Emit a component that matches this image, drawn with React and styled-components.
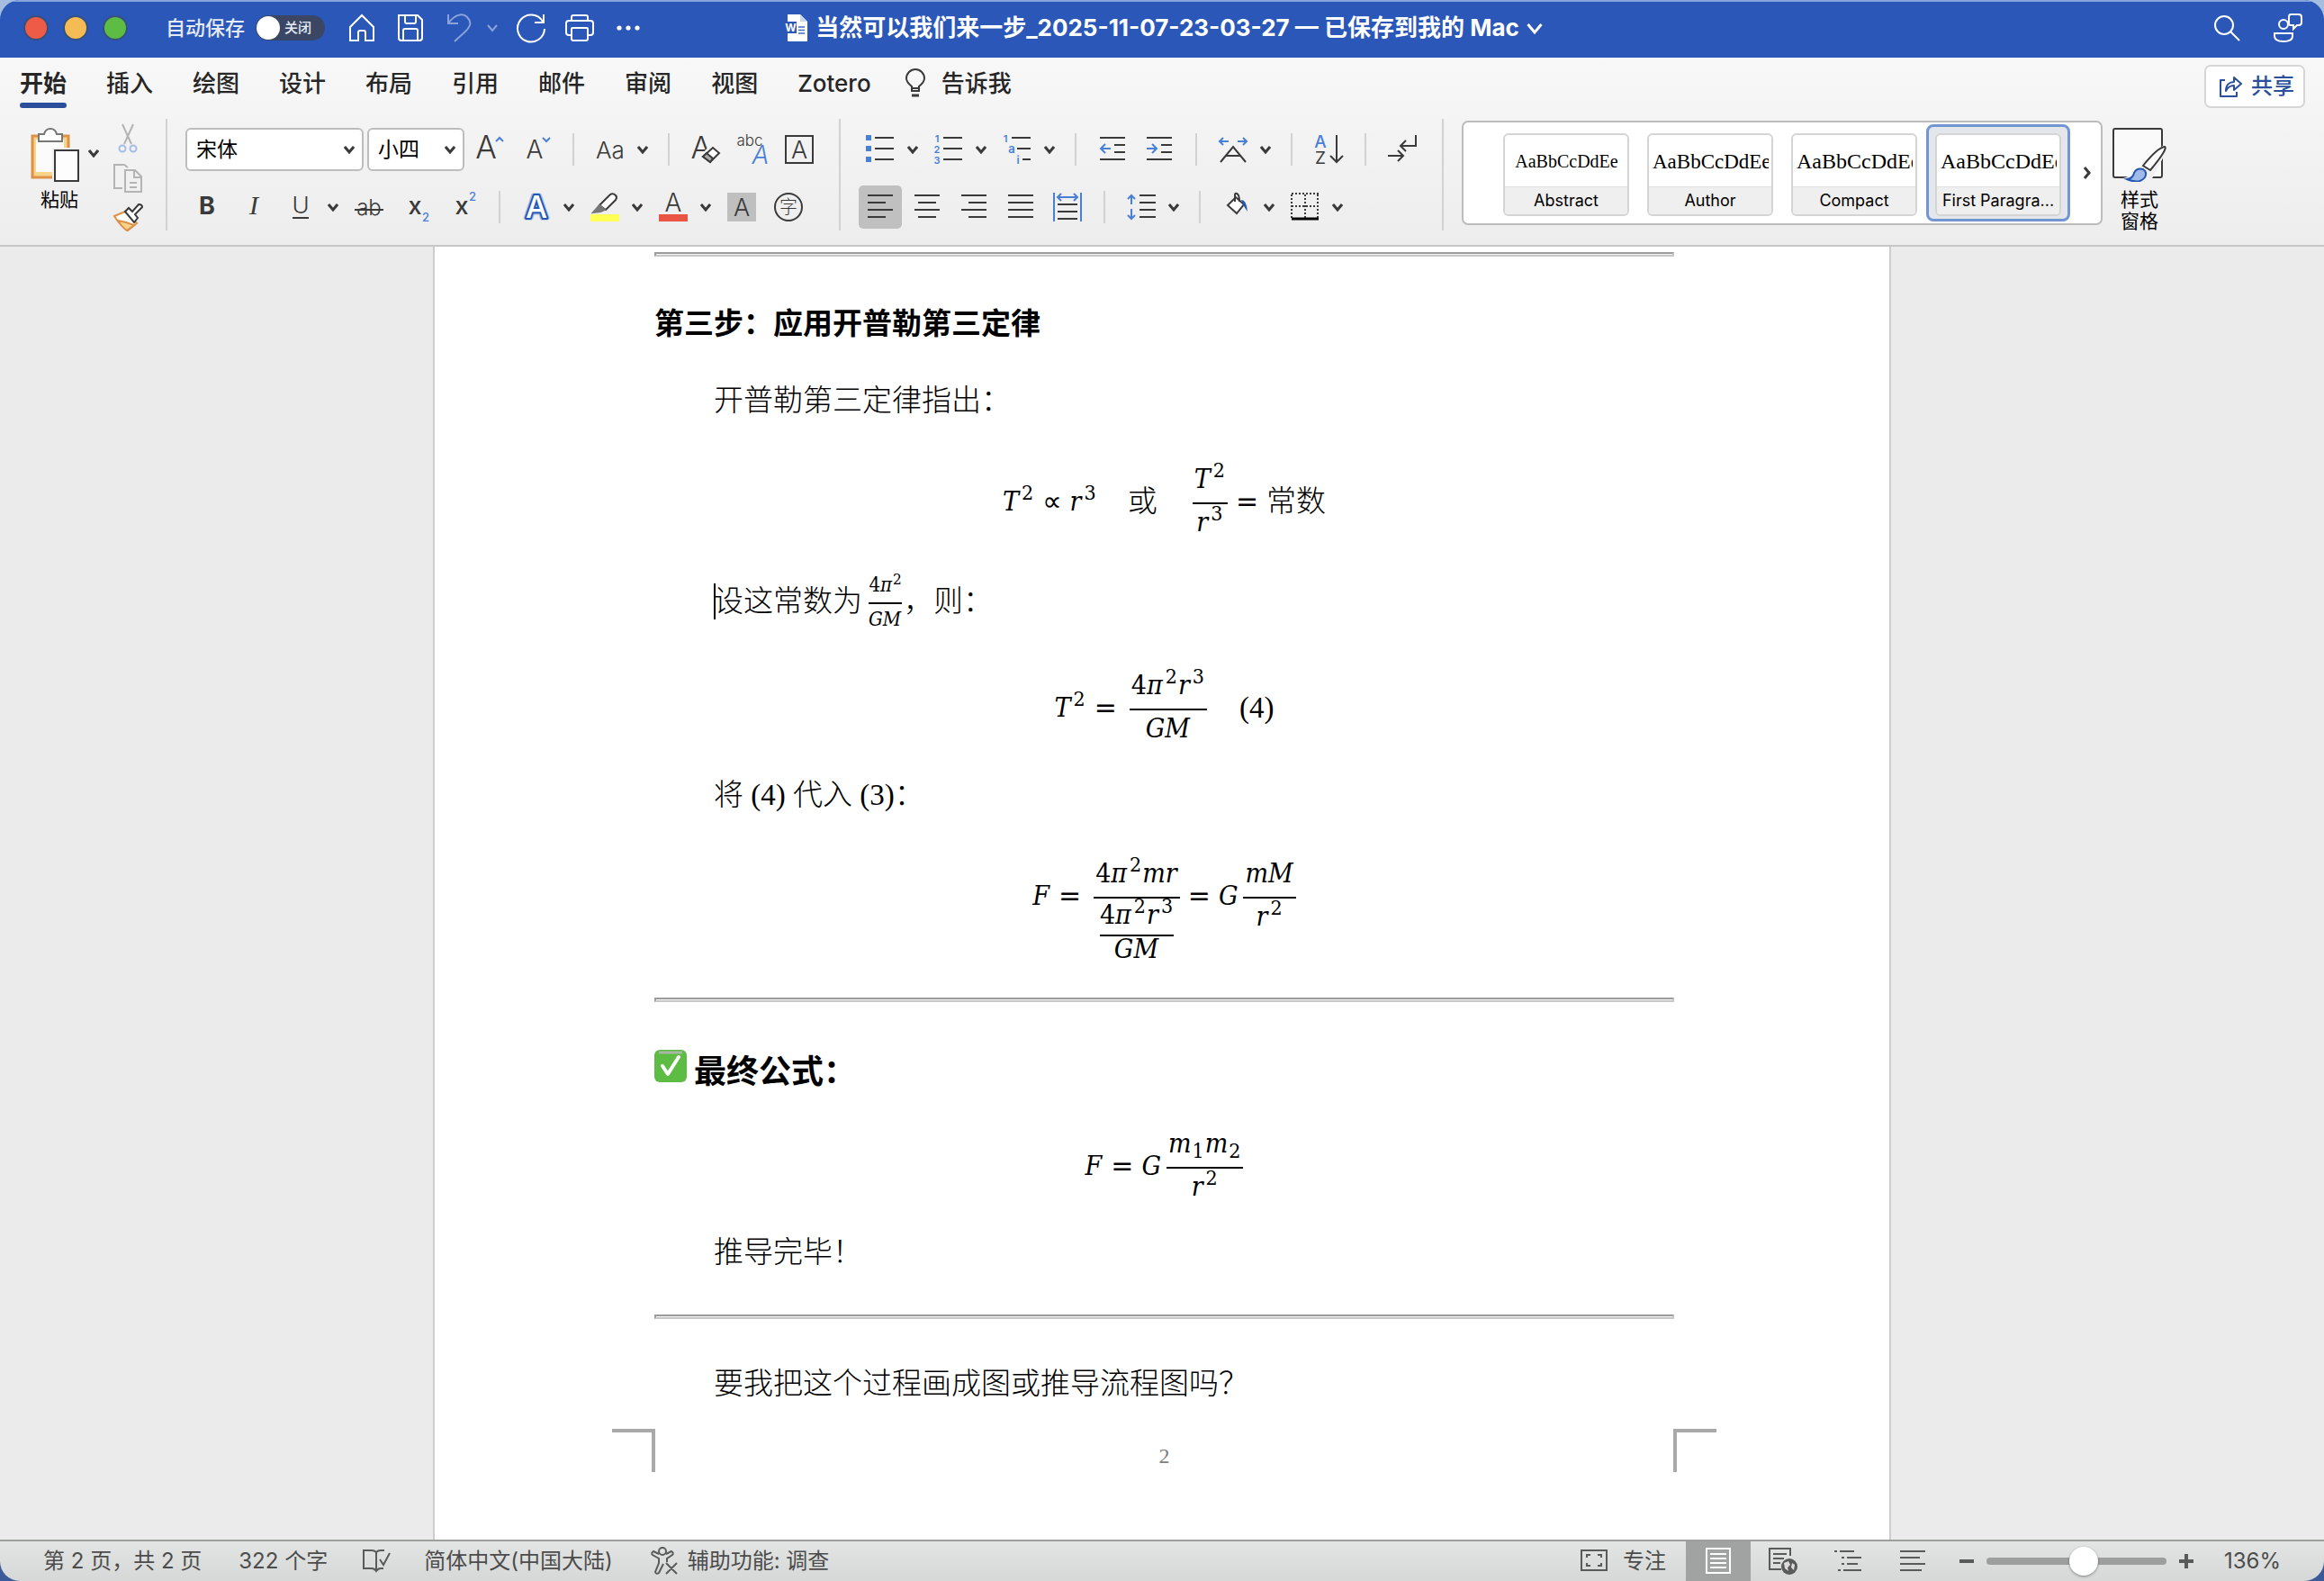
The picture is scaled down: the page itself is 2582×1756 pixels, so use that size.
import styled, { createGlobalStyle } from "styled-components";

const INK = "#3a3a3a";
const BLUE = "#4a7fd6";
const UI_FONT = `Inter, "Noto Sans CJK SC", sans-serif`;
const DOC_FONT = `"Liberation Serif", "Noto Sans CJK SC", serif`;
const MATH_FONT = `"DejaVu Serif Condensed", "DejaVu Serif", serif`;

export default function App() {
  return (
    <Window>
      <GlobalStyle />
      <TitleBar />
      <TabBar />
      <Ribbon />
      <Document />
      <StatusBar />
    </Window>
  );
}

/* ---------- title bar ---------- */

function TitleBar() {
  return (
    <Title>
      <TitleSide>
        <Lights>
          <Light $color="#ee5b47" />
          <Light $color="#f5bb55" />
          <Light $color="#5cbc44" />
        </Lights>
        <AutoSave>
          自动保存
          <Switch>
            <SwitchInput type="checkbox" />
            <SwitchText>关闭</SwitchText>
          </Switch>
        </AutoSave>
        <QuickTools>
          <Plain aria-label="主页">
            <Icon>
              <path d="M3 15 16 2l13 13v15h-9V21q0-2-2-2h-4q-2 0-2 2v9H3z" />
            </Icon>
          </Plain>
          <Plain aria-label="保存">
            <Icon>
              <path d="M3 2h21l5 5v20q0 3-3 3H6q-3 0-3-3zM10 2v7q0 2 2 2h8q2 0 2-2V2M8 30V19q0-2 2-2h12q2 0 2 2v11" />
            </Icon>
          </Plain>
          <Plain aria-label="撤销" $dim>
            <Icon>
              <path d="M4 1v10h11M4 11C11 1 20-1 25 4c6 6 3 11-2 16L11 31" />
            </Icon>
          </Plain>
          <Plain aria-label="撤销选项" $dim>
            <Chevron $thin />
          </Plain>
          <Plain aria-label="重做">
            <Icon>
              <path d="M30 1v9H20M29 9A15 15 0 1 0 31 17" />
            </Icon>
          </Plain>
          <Plain aria-label="打印">
            <Icon>
              <path d="M7 8V4q0-2 2-2h14q2 0 2 2v4M7 24H4q-3 0-3-3v-10q0-3 3-3h24q3 0 3 3v10q0 3-3 3h-3M7 17q0-1 1-1h16q1 0 1 1v11q0 2-2 2H9q-2 0-2-2z" />
            </Icon>
          </Plain>
          <Plain aria-label="更多">
            <Icon>
              <g fill="#fff" stroke="none">
                <circle cx="6" cy="16" r="2.6" />
                <circle cx="16" cy="16" r="2.6" />
                <circle cx="26" cy="16" r="2.6" />
              </g>
            </Icon>
          </Plain>
        </QuickTools>
      </TitleSide>
      <FileName>
        <svg width="26" height="30" viewBox="0 0 26 30">
          <path d="M3 0h14l8 8v22H3z" fill="#fff" />
          <path d="M17 0v8h8z" fill="#c9d5ea" />
          <path d="M15 14h7M15 17.500h7M15 21h7" stroke="#3f6cc4" strokeWidth="1.500" />
          <rect x="0" y="8" width="13" height="13" fill="#2b58b8" />
          <text x="6.500" y="19" textAnchor="middle" fontSize="12" fontWeight="700" fill="#fff" fontFamily="Inter">
            W
          </text>
        </svg>
        <span>当然可以我们来一步_2025-11-07-23-03-27 — 已保存到我的 Mac</span>
        <Chevron $w={18} $thin />
      </FileName>
      <TitleEnd>
        <Plain aria-label="搜索">
          <Icon>
            <circle cx="13" cy="13" r="10" />
            <path d="m20 20 10 10" />
          </Icon>
        </Plain>
        <Plain aria-label="批注">
          <Icon>
            <circle cx="11" cy="12" r="5" />
            <path d="M1 22h20v3q0 6-10 6T1 25zM19 1h9q3 0 3 3v6q0 3-3 3h-2l-4 4v-4h-3q-2 0-2-2V4q0-3 2-3z" />
          </Icon>
        </Plain>
      </TitleEnd>
    </Title>
  );
}

/* ---------- tabs ---------- */

const tabs = ["开始", "插入", "绘图", "设计", "布局", "引用", "邮件", "审阅", "视图", "Zotero"];

function TabBar() {
  return (
    <Tabs>
      {tabs.map((name, i) => (
        <Tab key={name} $active={i === 0}>
          {name}
        </Tab>
      ))}
      <TellMe>
        <svg width="26" height="34" viewBox="0 0 26 34" fill="none" stroke={INK} strokeWidth="2">
          <path d="M9 25v-5C4 16 3 13 3 11a10 10 0 0 1 20 0c0 2-1 5-6 9v5zM9 22h8" />
          <path d="M9 30h8" strokeWidth="3" />
        </svg>
        告诉我
      </TellMe>
      <Share>
        <svg width="26" height="24" viewBox="0 0 26 24" fill="none" stroke="#2b4f9b" strokeWidth="2" strokeLinejoin="round">
          <path d="M7 5H2v18h18v-5" />
          <path d="M8 17C8 10 12 7 17 7V2l8 7-8 7v-5c-4 0-7 2-9 6z" />
        </svg>
        共享
      </Share>
    </Tabs>
  );
}

/* ---------- ribbon ---------- */

function Ribbon() {
  return (
    <RibbonBar>
      <Paste>
        <svg width="64" height="60" viewBox="0 0 64 60" fill="none">
          <path d="M2 9h40v46H2z" fill="#f6d48c" stroke="#dd9146" strokeWidth="3" />
          <path d="M6 13h31v36H6z" fill="#fbfbfb" />
          <path d="M9 15V7h6c2-8 12-8 14 0h6v8z" fill="#fff" stroke="#777" strokeWidth="2" />
          <path d="M24 22h30v38H24z" fill="#f0f0f0" />
          <path d="M27 25h26v34H27z" fill="#fdfdfd" stroke={INK} strokeWidth="2" />
        </svg>
        粘贴
      </Paste>
      <PasteMore aria-label="粘贴选项">
        <Chevron />
      </PasteMore>
      <ClipColumn>
        <Tool aria-label="剪切">
          <Icon>
            <path d="M10 0 20 22M22 0 12 22" stroke="#b4b4b4" />
            <g stroke="#a3bde6">
              <circle cx="10" cy="27" r="3.500" />
              <circle cx="22" cy="27" r="3.500" />
            </g>
          </Icon>
        </Tool>
        <Tool aria-label="复制">
          <Icon stroke="#b4b4b4">
            <path d="M10 27H1V1h11l4 3M13 7h11l7 7v17H13zM23 7v8h8M18 21h8M18 26h8" />
          </Icon>
        </Tool>
        <Tool aria-label="格式刷">
          <Icon>
            <path d="m1 14 12-5 13 13-10 8Q7 24 1 14z" fill="#fff" stroke="#dd9146" />
            <path d="m5 19 9 2 9 3-8 6q-6-4-10-11z" fill="#f6d48c" stroke="#dd9146" />
            <path d="m13 9 4-4 4 4 7-8q4 0 4 3l-8 8 3 4-4 5z" fill="#fff" />
          </Icon>
        </Tool>
      </ClipColumn>
      <GroupLine $left={26} $right={20} />

      <Rows>
        <Row>
          <Field $width={198}>
            <select aria-label="字体">
              <option>宋体</option>
            </select>
            <Chevron />
          </Field>
          <Field $width={108} $snug>
            <select aria-label="字号">
              <option>小四</option>
            </select>
            <Chevron />
          </Field>
          <Tool aria-label="增大字号" $near>
            <Icon>
              <Glyph x="12" y="26" size={35}>A</Glyph>
              <path d="m23 7 4-4 4 4" stroke={BLUE} />
            </Icon>
          </Tool>
          <Tool aria-label="减小字号">
            <Icon>
              <Glyph x="14" y="26" size={28}>A</Glyph>
              <path d="m23 3 4 4 4-4" stroke={BLUE} />
            </Icon>
          </Tool>
          <Line />
          <Tool aria-label="更改大小写">
            <Icon>
              <Glyph x="16" y="26" size={26}>Aa</Glyph>
            </Icon>
          </Tool>
          <More />
          <Line />
          <Tool aria-label="清除格式">
            <Icon>
              <Glyph x="11" y="26" size={34}>A</Glyph>
              <path d="m13 23 10-10 8 6-10 11z" fill="#f3f3f3" stroke="#f3f3f3" strokeWidth="5" />
              <path d="m13 24 11-10 7 6-10 10z" fill="#fff" />
              <path d="m13 24 4-4 7 6-3 4z" fill="#aaa" />
            </Icon>
          </Tool>
          <Tool aria-label="拼音指南">
            <Icon>
              <Glyph x="13" y="12" size={17}>abc</Glyph>
              <Glyph x="25" y="32" size={28} color={BLUE} slant>A</Glyph>
            </Icon>
          </Tool>
          <Tool aria-label="字符边框">
            <Icon>
              <path d="M1 1h30v30H1z" />
              <Glyph x="16" y="26" size={27}>A</Glyph>
            </Icon>
          </Tool>
        </Row>
        <Row $inset>
          <Tool aria-label="加粗">
            <Icon>
              <Glyph x="16" y="24" size={27} weight={700}>B</Glyph>
            </Icon>
          </Tool>
          <Tool aria-label="倾斜">
            <Icon>
              <Glyph x="16" y="24" size={30} family="Liberation Serif" slant>I</Glyph>
            </Icon>
          </Tool>
          <Tool aria-label="下划线">
            <Icon>
              <Glyph x="16" y="23" size={26}>U</Glyph>
              <path d="M7 28h18" />
            </Icon>
          </Tool>
          <More />
          <Tool aria-label="删除线">
            <Icon>
              <Glyph x="16" y="25" size={24}>ab</Glyph>
              <path d="M0 19h32" />
            </Icon>
          </Tool>
          <Tool aria-label="下标">
            <Icon>
              <Glyph x="15" y="24" size={27} weight={500}>x</Glyph>
              <Glyph x="27" y="32" size={13} color={BLUE} weight={500}>2</Glyph>
            </Icon>
          </Tool>
          <Tool aria-label="上标">
            <Icon>
              <Glyph x="15" y="24" size={27} weight={500}>x</Glyph>
              <Glyph x="27" y="9" size={13} color={BLUE} weight={500}>2</Glyph>
            </Icon>
          </Tool>
          <Line />
          <Tool aria-label="文本效果">
            <Icon>
              <g strokeLinejoin="round">
                <text x="16" y="28" textAnchor="middle" fontFamily="Inter" fontWeight="700" fontSize="34" fill="#a9c1ea" stroke="#a9c1ea" strokeWidth="5">
                  A
                </text>
                <text x="16" y="28" textAnchor="middle" fontFamily="Inter" fontWeight="500" fontSize="34" fill="#fff" stroke="#2456b4" strokeWidth="4" paintOrder="stroke">
                  A
                </text>
              </g>
            </Icon>
          </Tool>
          <More />
          <Tool aria-label="突出显示">
            <Icon>
              <path d="m10 14 12-12q3-2 6 1 2 2 0 5L17 19z" fill="#fff" />
              <path d="m10 14 6 5-5 2-8 1z" fill="#777" stroke="#777" />
              <path d="M0 24h32v8H0z" fill="#ffff54" stroke="none" />
            </Icon>
          </Tool>
          <More />
          <Tool aria-label="字体颜色">
            <Icon>
              <Glyph x="16" y="21" size={28}>A</Glyph>
              <path d="M0 24h32v8H0z" fill="#e95445" stroke="none" />
            </Icon>
          </Tool>
          <More />
          <Tool aria-label="字符底纹">
            <Icon>
              <path d="M0 0h32v32H0z" fill="#bfbfbf" stroke="none" />
              <Glyph x="16" y="26" size={27}>A</Glyph>
            </Icon>
          </Tool>
          <Tool aria-label="带圈字符">
            <Icon>
              <circle cx="16" cy="16" r="15" />
              <Glyph x="16" y="23" size={20} family="Noto Sans CJK SC">字</Glyph>
            </Icon>
          </Tool>
        </Row>
      </Rows>
      <GroupLine $left={28} $right={28} />

      <Rows>
        <Row>
          <Tool aria-label="项目符号">
            <Icon>
              <path d="M0 0h6v6H0zM0 12h6v6H0zM0 24h6v6H0z" fill={BLUE} stroke="none" />
              <path d="M10 3h21M10 15h21M10 27h21" />
            </Icon>
          </Tool>
          <More />
          <Tool aria-label="编号">
            <Icon>
              <Glyph x="3" y="8" size={11} color={BLUE} weight={600}>1</Glyph>
              <Glyph x="3" y="20" size={11} color={BLUE} weight={600}>2</Glyph>
              <Glyph x="3" y="32" size={11} color={BLUE} weight={600}>3</Glyph>
              <path d="M10 3h21M10 15h21M10 27h21" />
            </Icon>
          </Tool>
          <More />
          <Tool aria-label="多级列表">
            <Icon>
              <Glyph x="3" y="8" size={11} color={BLUE} weight={600}>1</Glyph>
              <Glyph x="10" y="20" size={13} color={BLUE} weight={600}>a</Glyph>
              <Glyph x="17" y="32" size={12} color={BLUE} weight={600}>i</Glyph>
              <path d="M10 3h21M16 15h15M22 27h9" />
            </Icon>
          </Tool>
          <More />
          <Line />
          <Tool aria-label="减少缩进量">
            <Icon>
              <path d="M2 3h28M18 11h12M18 19h12M2 27h28" />
              <path d="M14 15H3M8 10l-5 5 5 5" stroke={BLUE} />
            </Icon>
          </Tool>
          <Tool aria-label="增加缩进量">
            <Icon>
              <path d="M2 3h28M18 11h12M18 19h12M2 27h28" />
              <path d="M2 15h11M8 10l5 5-5 5" stroke={BLUE} />
            </Icon>
          </Tool>
          <Line />
          <Tool aria-label="中文版式">
            <Icon>
              <path d="m2 30 14-17 14 17M8 23h16" />
              <path d="M11 7H1M5 3 1 7l4 4M21 7h10M27 3l4 4-4 4" stroke={BLUE} />
            </Icon>
          </Tool>
          <More />
          <Line />
          <Tool aria-label="排序">
            <Icon>
              <Glyph x="7" y="14" size={19} color={BLUE} weight={500}>A</Glyph>
              <Glyph x="7" y="32" size={19} weight={400}>Z</Glyph>
              <path d="M25 0v30M18 23l7 7 7-7" />
            </Icon>
          </Tool>
          <Line />
          <Tool aria-label="显示编辑标记">
            <Icon>
              <path d="M31 0v12H15M20 6l-6 6 6 6M0 23h16M11 17l6 6-6 6" />
            </Icon>
          </Tool>
        </Row>
        <Row>
          <Tool aria-label="左对齐" $on>
            <Icon>
              <path d="M2 3h28M2 11h20M2 19h28M2 27h20" />
            </Icon>
          </Tool>
          <Tool aria-label="居中">
            <Icon>
              <path d="M2 3h28M6 11h20M2 19h28M6 27h20" />
            </Icon>
          </Tool>
          <Tool aria-label="右对齐">
            <Icon>
              <path d="M2 3h28M10 11h20M2 19h28M10 27h20" />
            </Icon>
          </Tool>
          <Tool aria-label="两端对齐">
            <Icon>
              <path d="M2 3h28M2 11h28M2 19h28M2 27h28" />
            </Icon>
          </Tool>
          <Tool aria-label="分散对齐">
            <Icon>
              <path d="M5 13h22M5 21h22M5 29h22" />
              <path d="M1 0v32M31 0v32M5 5h22M9 1 5 5l4 4M23 1l4 4-4 4" stroke={BLUE} />
            </Icon>
          </Tool>
          <Line />
          <Tool aria-label="行距">
            <Icon>
              <path d="M14 3h18M14 11h18M14 19h18M14 27h18" />
              <path d="M5 13V3M1 7l4-4 4 4M5 18v11M1 25l4 4 4-4" stroke={BLUE} />
            </Icon>
          </Tool>
          <More />
          <Line />
          <Tool aria-label="底纹">
            <Icon>
              <path d="m6 14 9-9 9 8-8 10zM14 10V3q0-3 2-2 3 1 3 9" fill="#fff" />
              <path d="M21 8q6 0 7 13-3-4-5-8z" fill="#2456b4" stroke="none" />
            </Icon>
          </Tool>
          <More />
          <Tool aria-label="边框">
            <Icon>
              <path d="M1 1h30M1 2v26M30 2v26M16 2v26M1 15h30" strokeDasharray="2 2" />
              <path d="M1 29h30" stroke="#000" strokeWidth="3" />
            </Icon>
          </Tool>
          <More />
        </Row>
      </Rows>
      <GroupLine $left={28} $right={20} />

      <Gallery>
        {styles.map((s) => (
          <StyleItem key={s.name} $on={s.on}>
            <StyleCard>
              <StylePreview $size={s.size}>
                <span>AaBbCcDdEe</span>
              </StylePreview>
              <StyleName>{s.name}</StyleName>
            </StyleCard>
          </StyleItem>
        ))}
        <GalleryMore aria-label="更多样式">
          <svg width="10" height="16" viewBox="0 0 10 16" fill="none" stroke={INK} strokeWidth="3">
            <path d="m2 2 5 6-5 6" />
          </svg>
        </GalleryMore>
      </Gallery>
      <StylePane>
        <svg width="60" height="60" viewBox="0 0 60 60" fill="none">
          <rect x="1" y="1" width="54" height="54" rx="2" fill="#fafafa" stroke={INK} strokeWidth="2" />
          <path d="M12 56q16-4 22-18L58 18l2 8-18 34z" fill="#f1f1f1" />
          <path d="M34 42Q50 22 58 21q4 2-16 26z" fill="#fff" stroke={INK} strokeWidth="2" />
          <path d="M16 57q7-1 8-7 3-6 10-4 5 3 2 9-6 8-20 2z" fill="#9fbbe8" stroke="#2456b4" strokeWidth="2" />
        </svg>
        <span>样式</span>
        <span>窗格</span>
      </StylePane>
    </RibbonBar>
  );
}

const styles = [
  { name: "Abstract", size: 20 },
  { name: "Author", size: 23 },
  { name: "Compact", size: 24 },
  { name: "First Paragra...", size: 24, on: true },
];

/* ---------- document ---------- */

function Document() {
  return (
    <Canvas>
      <Page>
        <Rule $top={6} />
        <Heading $top={48}>第三步：应用开普勒第三定律</Heading>
        <Para $top={40}>开普勒第三定律指出：</Para>
        <Equation $top={41}>
          <span>
            <Var>T</Var>
            <Sup>2</Sup>
          </span>
          <Rel>∝</Rel>
          <span>
            <Var>r</Var>
            <Sup>3</Sup>
          </span>
          <Word>或</Word>
          <Fraction>
            <Num>
              <Var>T</Var>
              <Sup>2</Sup>
            </Num>
            <Den>
              <Var>r</Var>
              <Sup>3</Sup>
            </Den>
          </Fraction>
          <Rel>=</Rel>
          <Cjk>常数</Cjk>
        </Equation>
        <Para $top={25}>
          <Caret />
          设这常数为
          <SmallFraction>
            <Num>
              4<Var>π</Var>
              <Sup>2</Sup>
            </Num>
            <Den>
              <Var>GM</Var>
            </Den>
          </SmallFraction>
          ，则：
        </Para>
        <Equation $top={32}>
          <span>
            <Var>T</Var>
            <Sup>2</Sup>
          </span>
          <Rel>=</Rel>
          <Fraction>
            <Num>
              4<Var>π</Var>
              <Sup>2</Sup>
              <Var>r</Var>
              <Sup>3</Sup>
            </Num>
            <Den>
              <Var>GM</Var>
            </Den>
          </Fraction>
          <Tag>(4)</Tag>
        </Equation>
        <Para $top={26}>将 (4) 代入 (3)：</Para>
        <Equation $top={41}>
          <Var>F</Var>
          <Rel>=</Rel>
          <Fraction>
            <Num>
              4<Var>π</Var>
              <Sup>2</Sup>
              <Var>mr</Var>
            </Num>
            <Den>
              <NestedFraction>
                <Num>
                  4<Var>π</Var>
                  <Sup>2</Sup>
                  <Var>r</Var>
                  <Sup>3</Sup>
                </Num>
                <Den>
                  <Var>GM</Var>
                </Den>
              </NestedFraction>
            </Den>
          </Fraction>
          <Rel>=</Rel>
          <Var>G</Var>
          <Fraction>
            <Num>
              <Var>mM</Var>
            </Num>
            <Den>
              <Var>r</Var>
              <Sup>2</Sup>
            </Den>
          </Fraction>
        </Equation>
        <Rule $top={66} />
        <Heading $top={50} $big>
          <svg width="36" height="36" viewBox="0 0 36 36">
            <rect width="36" height="36" rx="6" fill="#5cbc44" />
            <path d="M5 3h26" stroke="#a9b8a4" strokeWidth="3" />
            <path d="m9 18 6 9L27 8" fill="none" stroke="#fff" strokeWidth="4" strokeLinecap="round" strokeLinejoin="round" />
          </svg>
          最终公式：
        </Heading>
        <Equation $top={37}>
          <Var>F</Var>
          <Rel>=</Rel>
          <Var>G</Var>
          <Fraction>
            <Num>
              <Var>m</Var>
              <Sub>1</Sub>
              <Var>m</Var>
              <Sub>2</Sub>
            </Num>
            <Den>
              <Var>r</Var>
              <Sup>2</Sup>
            </Den>
          </Fraction>
        </Equation>
        <Para $top={25}>推导完毕！</Para>
        <Rule $top={45} />
        <Para $top={48}>要我把这个过程画成图或推导流程图吗？</Para>
        <PageFoot>
          <Corner $side="right" />
          2
          <Corner $side="left" />
        </PageFoot>
      </Page>
    </Canvas>
  );
}

/* ---------- status bar ---------- */

function StatusBar() {
  return (
    <Status>
      <span>第 2 页，共 2 页</span>
      <StatusText $gap={41}>322 个字</StatusText>
      <StatusText $gap={38}>
        <Icon stroke="#5a5a5a">
          <path d="M16 6q-2-2-5-2H2v20h9q3 0 5 3 2-3 5-3h3M16 6v20M16 6q2-2 5-2h4M20 14l4 6 7-13" />
        </Icon>
      </StatusText>
      <StatusText $gap={37}>简体中文(中国大陆)</StatusText>
      <StatusText $gap={41}>
        <Icon stroke="#5a5a5a">
          <circle cx="14" cy="5" r="4" />
          <path d="M10 8 4 5q-3 2-1 4l7 4v5L6 28q1 3 4 1l5-10M18 8l6-3q3 2 1 4l-6 4v4M18 18l12 12M30 18 18 30" />
        </Icon>
        <span>辅助功能: 调查</span>
      </StatusText>
      <StatusEnd>
        <Focus>
          <Icon stroke="#5a5a5a">
            <path d="M2 4h28v22H2zM8 12V9h4M20 9h4v3M8 18v3h4M20 21h4v-3" />
          </Icon>
          专注
        </Focus>
        <View aria-label="打印版式" $on>
          <Icon stroke="#fff">
            <path d="M3 2h26v27H3zM7 8h18M7 13h18M7 18h18M7 23h18" />
          </Icon>
        </View>
        <View aria-label="Web 版式">
          <Icon stroke="#5a5a5a">
            <path d="M14 25H1V2h23v8M5 8h15M5 13h12M5 18h8" />
            <circle cx="23" cy="22" r="9" fill="#5a5a5a" stroke="none" />
            <path d="m17 18 5-2 2 4-3 3 1 4-4-3zM26 18l3 2-1 6-3-3z" fill="#ddd" stroke="none" />
          </Icon>
        </View>
        <View aria-label="大纲">
          <Icon stroke="#5a5a5a">
            <path d="M1 5h3M7 5h16M9 12h3M15 12h16M9 19h3M15 19h12M5 26h3M11 26h20" />
          </Icon>
        </View>
        <View aria-label="草稿">
          <Icon stroke="#5a5a5a">
            <path d="M2 5h28M2 12h22M2 19h28M2 26h24" />
          </Icon>
        </View>
        <Zoom>
          <Plain aria-label="缩小">
            <svg width="16" height="16" stroke="#5a5a5a" strokeWidth="4">
              <path d="M0 8h16" />
            </svg>
          </Plain>
          <Slider type="range" aria-label="缩放" min="0" max="100" defaultValue="55" />
          <Plain aria-label="放大">
            <svg width="16" height="16" stroke="#5a5a5a" strokeWidth="4">
              <path d="M0 8h16M8 0v16" />
            </svg>
          </Plain>
        </Zoom>
        <span>136%</span>
      </StatusEnd>
    </Status>
  );
}

/* ---------- shared drawings ---------- */

function Icon({ children, stroke = "currentColor" }) {
  return (
    <IconSvg viewBox="0 0 32 32" fill="none" stroke={stroke} strokeWidth="2">
      {children}
    </IconSvg>
  );
}

function Glyph({ x, y, size, color = INK, weight = 300, family = "Inter", slant, children }) {
  return (
    <text
      x={x}
      y={y}
      textAnchor="middle"
      fontSize={size}
      fontWeight={weight}
      fontFamily={family}
      fontStyle={slant ? "italic" : "normal"}
      fill={color}
      stroke="none"
    >
      {children}
    </text>
  );
}

function Chevron({ $w = 12, $thin }) {
  return (
    <ChevronSvg width={$w} viewBox="0 0 12 10" fill="none" stroke="currentColor" strokeWidth={$thin ? 2 : 3}>
      <path d="m1 2 5 6 5-6" />
    </ChevronSvg>
  );
}

function More() {
  return (
    <MoreButton aria-label="更多选项">
      <Chevron />
    </MoreButton>
  );
}

/* ---------- styles ---------- */

const GlobalStyle = createGlobalStyle`
  * {
    box-sizing: border-box;
  }
  body {
    margin: 0;
    background: linear-gradient(#a5bedf 50%, #3b5a9a 50%);
    font-family: ${UI_FONT};
  }
  button, select, input {
    font: inherit;
    color: inherit;
  }
`;

const Window = styled.div`
  display: flex;
  flex-direction: column;
  height: 100vh;
  overflow: hidden;
  border-radius: 22px;
  color: #000;
`;

const IconSvg = styled.svg`
  width: 32px;
  height: 32px;
  flex: none;
  display: block;
  overflow: visible;
`;

const ChevronSvg = styled.svg`
  display: block;
  flex: none;
`;

const Plain = styled.button`
  display: flex;
  padding: 0;
  border: 0;
  background: none;
  opacity: ${(p) => (p.$dim ? 0.45 : 1)};
`;

const Title = styled.header`
  display: grid;
  grid-template-columns: 1fr auto 1fr;
  align-items: center;
  height: 64px;
  padding: 0 24px 4px 28px;
  border-top: 2px solid #86a5dc;
  background: #2b58b8;
  line-height: 32px;
  color: #fff;
`;

const TitleSide = styled.div`
  display: flex;
  align-items: center;
`;

const Lights = styled.div`
  display: flex;
  gap: 20px;
`;

const Light = styled.span`
  width: 24px;
  height: 24px;
  border-radius: 50%;
  background: ${(p) => p.$color};
  box-shadow: 0 0 0 2px #35517f;
`;

const AutoSave = styled.div`
  display: flex;
  align-items: center;
  gap: 12px;
  margin-left: 44px;
  font-size: 22px;
  font-weight: 500;
  color: #e4eaf6;
`;

const Switch = styled.label`
  display: flex;
  align-items: center;
  gap: 5px;
  width: 77px;
  height: 28px;
  border-radius: 14px;
  background: #3a4664;
`;

const SwitchInput = styled.input`
  appearance: none;
  width: 26px;
  height: 26px;
  margin: 0 0 0 1px;
  border-radius: 50%;
  background: #fff;
`;

const SwitchText = styled.span`
  font-size: 15px;
`;

const QuickTools = styled.div`
  display: flex;
  align-items: center;
  gap: 22px;
  margin-left: 25px;

  button:nth-child(4) {
    margin: 0 -1px 0 -7px;
  }
`;

const FileName = styled.div`
  display: flex;
  align-items: center;
  gap: 8px;
  font-size: 26px;
  font-weight: 700;
  white-space: nowrap;
`;

const TitleEnd = styled.div`
  display: flex;
  justify-content: flex-end;
  gap: 36px;
`;

const Tabs = styled.nav`
  display: flex;
  align-items: flex-start;
  gap: 44px;
  height: 68px;
  padding: 8px 21px 0 22px;
  background: linear-gradient(#f8f8f8, #f4f4f4);
`;

const Tab = styled.button`
  padding: 0;
  border: 0;
  background: none;
  font-size: 26px;
  font-weight: ${(p) => (p.$active ? 700 : 500)};
  line-height: 42px;
  color: #262626;

  &::after {
    content: "";
    display: block;
    height: 6px;
    border-radius: 3px;
    background: ${(p) => (p.$active ? "#2b4f9b" : "transparent")};
  }
`;

const TellMe = styled(Tab)`
  display: flex;
  align-items: center;
  gap: 16px;
  margin-left: -8px;

  &::after {
    content: none;
  }
`;

const Share = styled.button`
  display: flex;
  align-items: center;
  justify-content: center;
  gap: 10px;
  width: 112px;
  height: 48px;
  margin-left: auto;
  padding: 0 0 0 4px;
  border: 2px solid #d6d6d6;
  border-radius: 7px;
  background: #fff;
  font-size: 24px;
  font-weight: 500;
  line-height: 32px;
  color: #2b4f9b;
`;

const RibbonBar = styled.section`
  display: flex;
  align-items: flex-start;
  height: 142px;
  padding-left: 34px;
  border-bottom: 2px solid #c6c6c6;
  background: linear-gradient(#f4f4f4, #ededed);
  color: ${INK};
`;

const Paste = styled.button`
  display: flex;
  flex-direction: column;
  align-items: center;
  gap: 8px;
  padding: 10px 0 0;
  border: 0;
  background: none;
  font-size: 21px;
  line-height: 24px;
  color: #000;
`;

const PasteMore = styled(Plain)`
  margin: 33px 16px 0 0;
`;

const ClipColumn = styled.div`
  display: flex;
  flex-direction: column;
  gap: 12px;
  padding-top: 6px;
`;

const GroupLine = styled.div`
  width: 2px;
  height: 124px;
  margin: 0 ${(p) => p.$right}px 0 ${(p) => p.$left}px;
  background: #d2d2d2;
`;

const Rows = styled.div`
  display: flex;
  flex-direction: column;
  gap: 16px;
  padding-top: 10px;
`;

const Row = styled.div`
  display: flex;
  align-items: center;
  gap: 20px;
  height: 48px;
  padding-left: ${(p) => (p.$inset ? 8 : 0)}px;
`;

const Tool = styled.button`
  flex: none;
  padding: ${(p) => (p.$on ? 8 : 0)}px;
  margin: ${(p) => (p.$on ? -8 : 0)}px;
  margin-left: ${(p) => (p.$near || p.$on ? -8 : 0)}px;
  border: 0;
  border-radius: 5px;
  background: ${(p) => (p.$on ? "#c0c0c0" : "none")};
`;

const MoreButton = styled(Plain)`
  margin: 0 -2px 0 -6px;
`;

const Line = styled.span`
  width: 2px;
  height: 36px;
  margin: 0 4px;
  background: #d2d2d2;
`;

const Field = styled.div`
  display: flex;
  align-items: center;
  width: ${(p) => p.$width}px;
  height: 48px;
  margin-left: ${(p) => (p.$snug ? -16 : 0)}px;
  padding-right: 8px;
  border: 2px solid #bdbdbd;
  border-radius: 6px;
  background: #fff;

  select {
    flex: 1;
    min-width: 0;
    padding: 0 0 0 10px;
    border: 0;
    appearance: none;
    background: none;
    font-size: 23px;
    color: #000;
  }
`;

const Gallery = styled.div`
  display: flex;
  align-items: center;
  height: 116px;
  margin-top: 2px;
  padding-left: 34px;
  border: 2px solid #bcbcbc;
  border-radius: 7px;
  background: #fff;
`;

const StyleItem = styled.button`
  width: 160px;
  height: 108px;
  padding: 7px 7px 5px;
  border: 3px solid ${(p) => (p.$on ? "#7396d2" : "transparent")};
  border-radius: 8px;
  background: ${(p) => (p.$on ? "#e3e6ea" : "none")};
  color: #000;
`;

const StyleCard = styled.span`
  display: flex;
  flex-direction: column;
  height: 92px;
  overflow: hidden;
  border: 2px solid #d4d4d4;
  border-radius: 6px;
  background: #fff;
`;

const StylePreview = styled.span`
  display: flex;
  align-items: center;
  flex: 1;
  margin: 2px 3px 0 4px;
  overflow: hidden;
  font-family: ${DOC_FONT};
  font-size: ${(p) => p.$size}px;

  span {
    margin: 0 auto;
  }
`;

const StyleName = styled.span`
  border-top: 1px solid #e0e0e0;
  background: #efefef;
  font-size: 18px;
  line-height: 30px;
  white-space: nowrap;
`;

const GalleryMore = styled(Plain)`
  justify-content: center;
  width: 34px;
  padding-left: 3px;
`;

const StylePane = styled(Paste)`
  gap: 0;
  margin-left: 11px;

  svg {
    margin-bottom: 8px;
  }
`;

const Canvas = styled.main`
  flex: 1;
  min-height: 0;
  overflow: hidden;
  background: #ebebeb;
`;

const Page = styled.article`
  width: 100%;
  max-width: 1620px;
  min-height: 100%;
  margin: 0 auto;
  padding: 0 239px 0 244px;
  display: flow-root;
  border: solid #cdcdcd;
  border-width: 0 2px;
  background: #fff;
  font-family: ${DOC_FONT};
  font-size: 33px;
  line-height: 48px;
`;

const Rule = styled.hr`
  height: 5px;
  margin: ${(p) => p.$top}px 0 0;
  border: 2px solid;
  border-color: #9c9c9c #c8c8c8 #c8c8c8 #9c9c9c;
  background: #f4f4f4;
`;

const Heading = styled.h2`
  display: flex;
  align-items: center;
  gap: 8px;
  margin: ${(p) => p.$top}px 0 0;
  font-family: "Noto Sans CJK SC", sans-serif;
  font-size: ${(p) => (p.$big ? 36 : 33)}px;
  font-weight: 700;

  svg {
    margin-bottom: 6px;
  }
`;

const Para = styled.p`
  display: flex;
  align-items: center;
  margin: ${(p) => p.$top}px 0 0;
  padding-left: 66px;
  font-weight: 300;
  white-space: pre;
`;

const Caret = styled.span`
  width: 2px;
  height: 40px;
  margin-right: -2px;
  background: #000;
`;

const Equation = styled.div`
  display: flex;
  align-items: center;
  justify-content: center;
  height: 94px;
  margin-top: ${(p) => p.$top}px;
  font-family: ${MATH_FONT};
  font-size: 30px;
`;

const Var = styled.i`
  margin-right: 1px;
`;

const Sup = styled.sup`
  margin: 0 1px 0 2px;
  font-size: 23px;
  line-height: 0;
  vertical-align: 12px;
`;

const Sub = styled.sub`
  margin-right: 1px;
  font-size: 23px;
  line-height: 0;
  vertical-align: -6px;
`;

const Rel = styled.span`
  margin: 0 9px;
  font-family: "DejaVu Sans", sans-serif;
`;

const Cjk = styled.span`
  font-family: ${DOC_FONT};
  font-size: 33px;
  font-weight: 300;
`;

const Word = styled(Cjk)`
  margin: 0 34px;
`;

const Tag = styled(Cjk)`
  margin-left: 36px;
`;

const Num = styled.span`
  border-bottom: 2px solid #000;
  white-space: nowrap;
`;

const Den = styled.span`
  white-space: nowrap;
`;

const Fraction = styled.span`
  display: flex;
  flex-direction: column;
  height: 94px;
  margin: 4px 0 0 5px;
  line-height: 40px;
  text-align: center;

  > ${Num} {
    padding: 0 2px 6px;
  }
`;

const SmallFraction = styled(Fraction)`
  height: 74px;
  margin: 4px 2px 0 7px;
  font-family: ${MATH_FONT};
  font-size: 22px;
  font-weight: 400;
  line-height: 34px;

  > ${Num} {
    padding: 0 0 2px;
  }

  ${Sup} {
    margin: 0;
    font-size: 17px;
    vertical-align: 8px;
  }
`;

const NestedFraction = styled(Fraction)`
  display: inline-flex;
  margin: 0;
  vertical-align: top;
  line-height: 36px;

  > ${Num} {
    padding: 0 0 4px;
  }

  > ${Den} {
    line-height: 28px;
  }
`;

const PageFoot = styled.footer`
  display: flex;
  justify-content: space-between;
  margin: 26px -47px 0;
  font-size: 24px;
  line-height: 60px;
  color: #808080;
`;

const Corner = styled.span`
  width: 48px;
  height: 48px;
  border-top: 4px solid #a9a9a9;
  border-${(p) => p.$side}: 4px solid #a9a9a9;
`;

const Status = styled.footer`
  display: flex;
  align-items: center;
  height: 46px;
  padding: 0 48px;
  border-top: 2px solid #9d9f9d;
  background: linear-gradient(#e2e5e3, #d6d8d7);
  font-size: 24px;
  line-height: 32px;
  color: #4c4c4c;
  white-space: nowrap;
`;

const StatusText = styled.span`
  display: flex;
  align-items: center;
  gap: 10px;
  margin-left: ${(p) => p.$gap}px;
`;

const StatusEnd = styled.div`
  display: flex;
  align-items: center;
  height: 100%;
  margin-left: auto;
`;

const Focus = styled(Plain)`
  align-items: center;
  gap: 16px;
  margin-right: 22px;
`;

const View = styled(Plain)`
  align-items: center;
  justify-content: center;
  width: 72px;
  height: 100%;
  background: ${(p) => (p.$on ? "#a0a3a1" : "none")};
`;

const Zoom = styled.div`
  display: flex;
  align-items: center;
  gap: 14px;
  margin: 0 34px 0 16px;
`;

const Slider = styled.input`
  appearance: none;
  width: 200px;
  height: 8px;
  margin: 0;
  border-radius: 4px;
  background: #9d9f9e;

  &::-webkit-slider-thumb {
    appearance: none;
    width: 32px;
    height: 32px;
    border-radius: 50%;
    background: #fff;
    box-shadow: 0 1px 3px rgba(0, 0, 0, 0.4);
  }
`;
